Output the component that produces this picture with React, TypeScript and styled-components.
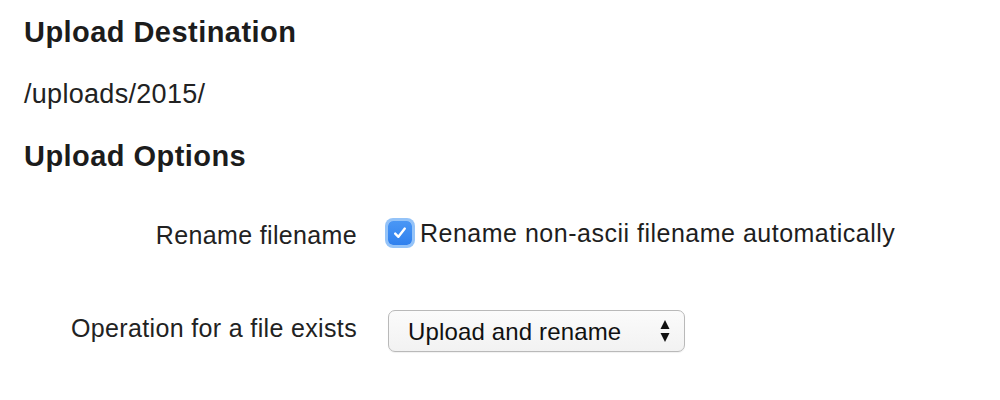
import React from "react";
import styled, { createGlobalStyle } from "styled-components";

const Global = createGlobalStyle`
  html, body { margin: 0; padding: 0; background: #ffffff; }
  body { font-family: "Liberation Sans", Arial, Helvetica, sans-serif; color: #222222; }
`;

const Page = styled.div`
  width: 1000px;
  height: 400px;
  padding-left: 24px;
  box-sizing: border-box;
  overflow: hidden;
`;

const Heading = styled.h2<{ $top: number }>`
  margin: ${(p) => p.$top}px 0 0 0;
  font-size: 29px;
  line-height: 32px;
  font-weight: bold;
  letter-spacing: 0.45px;
  color: #1c1c1c;
`;

const PathText = styled.p`
  margin: 31px 0 0 0;
  font-size: 27px;
  line-height: 30px;
  letter-spacing: 0.3px;
  color: #222;
`;

const Row = styled.div<{ $top: number }>`
  display: flex;
  align-items: flex-start;
  gap: 31px;
  margin-top: ${(p) => p.$top}px;
`;

const Label = styled.div<{ $pad: number }>`
  width: 333px;
  text-align: right;
  font-size: 25px;
  line-height: 28px;
  letter-spacing: 0.35px;
  padding-top: ${(p) => p.$pad}px;
  color: #222;
`;

const CheckWrap = styled.label`
  display: flex;
  align-items: center;
  gap: 8px;
  font-size: 25px;
  line-height: 28px;
  letter-spacing: 0.5px;
  color: #1e1e1e;
`;

const CheckBox = styled.span`
  width: 24px;
  height: 24px;
  border-radius: 5px;
  background: linear-gradient(#4a97f5, #2f80ee);
  box-shadow: 0 0 0 3px #94c3f8;
  display: flex;
  align-items: center;
  justify-content: center;
  flex-shrink: 0;
`;

const SelectWrap = styled.div`
  position: relative;
  width: 297px;
  height: 42px;
`;

const Select = styled.select`
  appearance: none;
  -webkit-appearance: none;
  width: 100%;
  height: 100%;
  box-sizing: border-box;
  border: 1px solid #b9b9b9;
  border-radius: 7px;
  background: linear-gradient(#fbfbfb, #f2f2f2);
  box-shadow: 0 1px 1px rgba(0, 0, 0, 0.06);
  padding: 0 0 0 19px;
  font-family: "Liberation Sans", Arial, Helvetica, sans-serif;
  font-size: 24px;
  letter-spacing: 0.15px;
  color: #111;
  outline: none;
`;

const Arrows = styled.svg`
  position: absolute;
  right: 15px;
  top: 10px;
  pointer-events: none;
`;

export default function App() {
  return (
    <>
      <Global />
      <Page>
        <Heading $top={16}>Upload Destination</Heading>
        <PathText>/uploads/2015/</PathText>
        <Heading $top={31}>Upload Options</Heading>
        <Row $top={47}>
          <Label $pad={2}>Rename filename</Label>
          <CheckWrap>
            <CheckBox>
              <svg width="16" height="16" viewBox="0 0 16 16">
                <path
                  d="M3.2 8.6 L6.4 11.8 L12.8 3.6"
                  fill="none"
                  stroke="#ffffff"
                  strokeWidth="2.4"
                  strokeLinecap="round"
                  strokeLinejoin="round"
                />
              </svg>
            </CheckBox>
            Rename non-ascii filename automatically
          </CheckWrap>
        </Row>
        <Row $top={61}>
          <Label $pad={4}>Operation for a file exists</Label>
          <SelectWrap>
            <Select defaultValue="rename">
              <option value="rename">Upload and rename</option>
              <option value="overwrite">Overwrite</option>
              <option value="skip">Skip</option>
            </Select>
            <Arrows width="10" height="22" viewBox="0 0 10 22">
              <path d="M5 0 L9.5 9 L0.5 9 Z" fill="#111" />
              <path d="M0.5 13 L9.5 13 L5 22 Z" fill="#111" />
            </Arrows>
          </SelectWrap>
        </Row>
      </Page>
    </>
  );
}
